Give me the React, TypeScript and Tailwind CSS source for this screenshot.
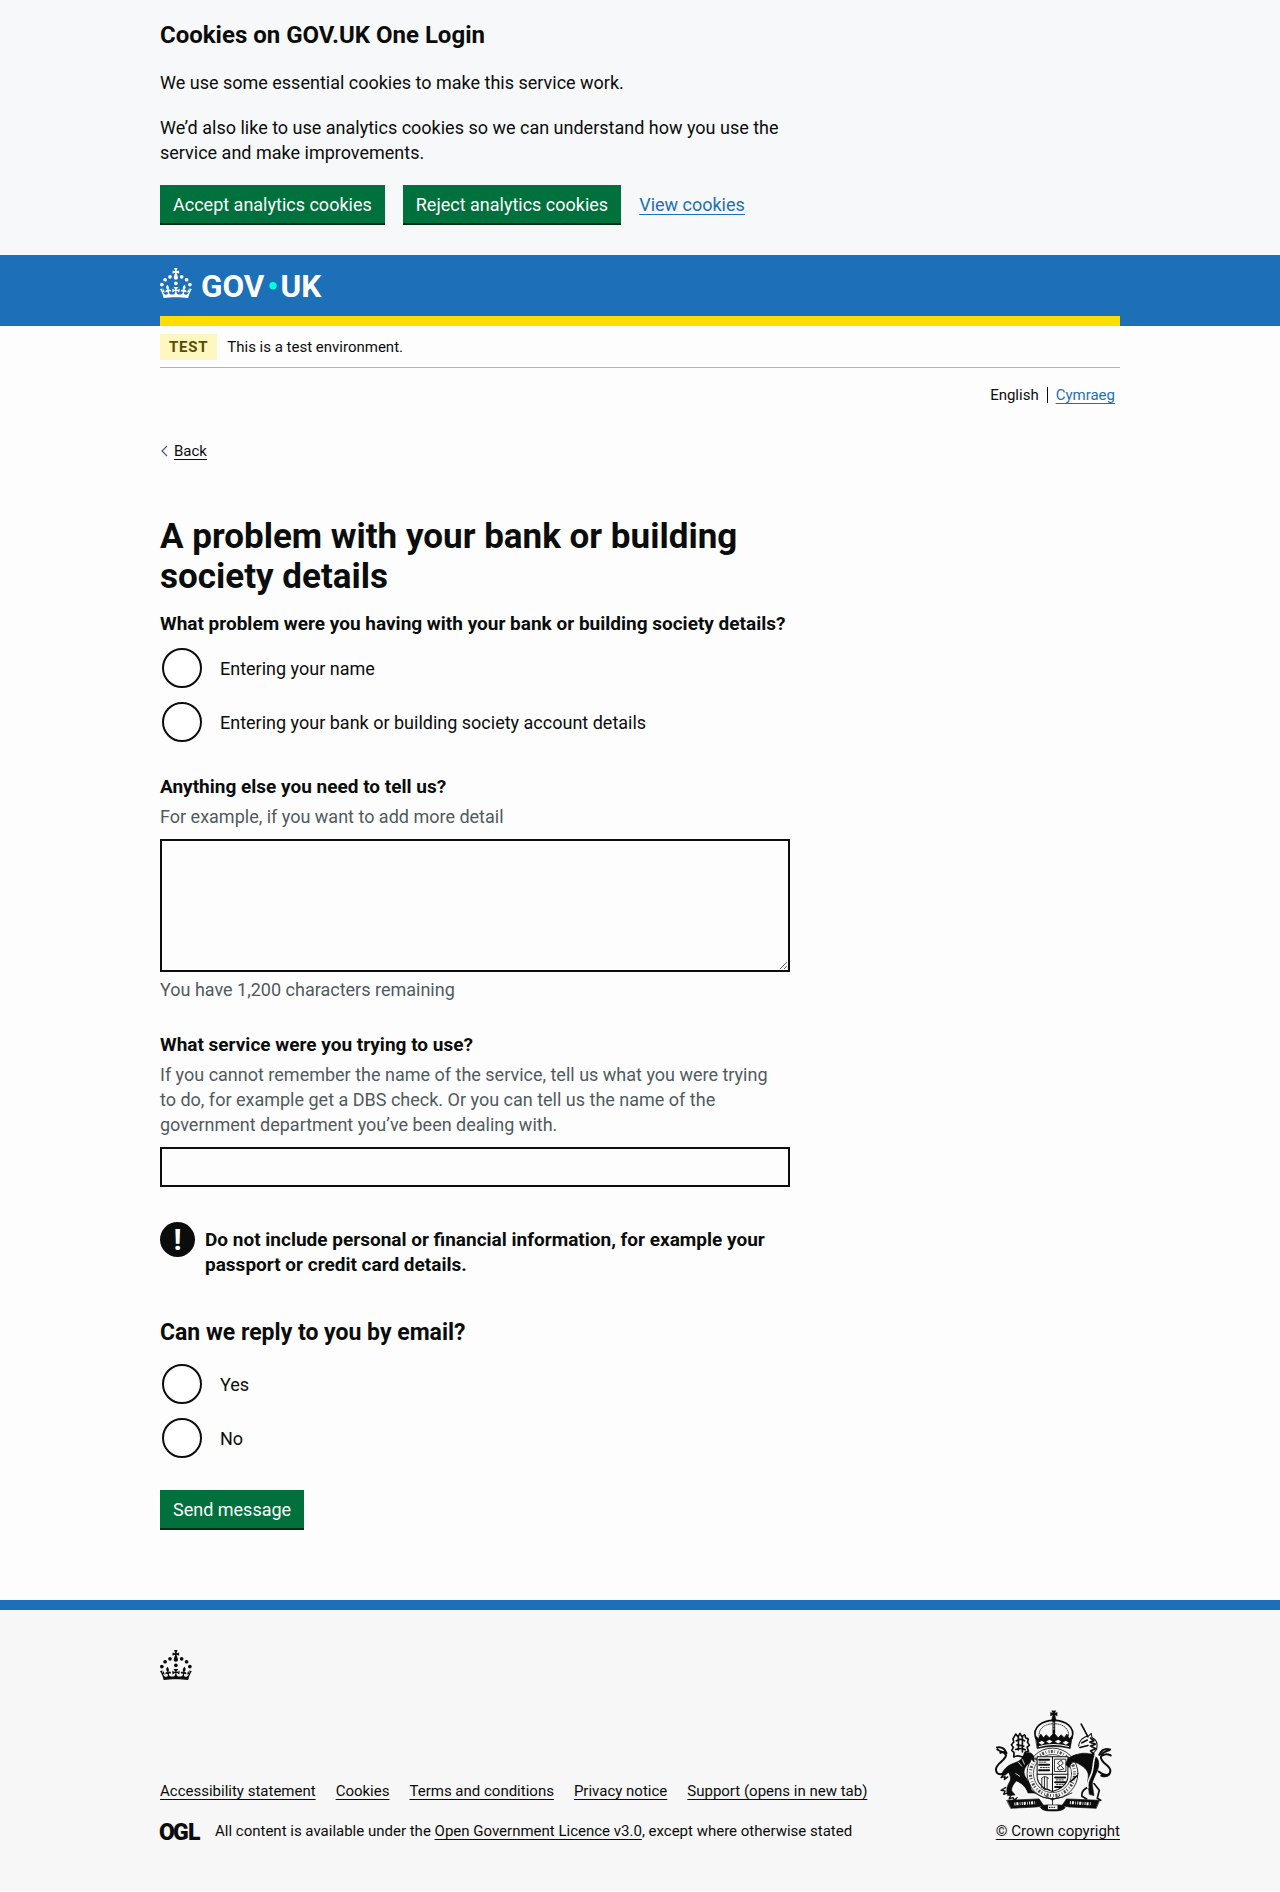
import { useState, type ReactNode } from 'react';

function CrownShape() {
  return (
    <>
      <circle cx="20" cy="17.6" r="3.7" />
      <circle cx="10.2" cy="23.5" r="3.7" />
      <circle cx="3.7" cy="33.2" r="3.7" />
      <circle cx="31.7" cy="30.6" r="3.7" />
      <circle cx="43.3" cy="17.6" r="3.7" />
      <circle cx="53.2" cy="23.5" r="3.7" />
      <circle cx="59.7" cy="33.2" r="3.7" />
      <path d="M33.1,9.8c.2-.1.3-.3.5-.5l4.6,2.4v-6.8l-4.6,1.5c-.1-.2-.3-.3-.5-.5l1.9-5.9h-6.7l1.9,5.9c-.2.1-.3.3-.5.5l-4.6-1.5v6.8l4.6-2.4c.1.2.3.3.5.5l-2.6,8c-.9,2.8,1.2,5.7,4.1,5.7h0c3,0,5.1-2.9,4.1-5.7l-2.6-8ZM37,37.9s-3.4,3.8-4.1,6.1c2.2,0,4.2-.5,6.4-2.8l-.7,8.5c-2-2.8-4.4-4.1-5.7-3.8.1,3.1.5,6.7,5.8,7.2,3.7.3,6.7-1.5,7-3.8.4-2.6-2-4.3-3.7-1.6-1.4-4.5,2.4-6.1,4.9-3.2-1.9-4.5-1.8-7.7,2.4-10.9,3,4,2.6,7.3-1.2,11.1,2.4-1.3,6.2,0,4,4.6-1.2-2.8-3.7-2.2-4.2.2-.3,1.7.7,3.7,3,4.2,1.9.3,4.7-.9,7-5.9-1.3,0-2.4.7-3.9,1.7l2.4-8c.6,2.3,1.4,3.7,2.2,4.5.6-1.6.5-2.8,0-5.3l5,1.8c-2.6,3.6-5.2,8.7-7.3,17.5-7.4-1.1-15.7-1.7-24.5-1.7h0c-8.8,0-17.1.6-24.5,1.7-2.1-8.9-4.7-13.9-7.3-17.5l5-1.8c-.5,2.5-.6,3.7,0,5.3.8-.8,1.6-2.3,2.2-4.5l2.4,8c-1.5-1-2.6-1.7-3.9-1.7,2.3,5,5.2,6.2,7,5.9,2.3-.4,3.3-2.4,3-4.2-.5-2.4-3-3.1-4.2-.2-2.2-4.6,1.6-6,4-4.6-3.7-3.7-4.2-7.1-1.2-11.1,4.2,3.2,4.3,6.4,2.4,10.9,2.5-2.8,6.3-1.3,4.9,3.2-1.8-2.7-4.1-1-3.7,1.6.3,2.3,3.3,4.1,7,3.8,5.4-.5,5.7-4.2,5.8-7.2-1.3-.2-3.7,1-5.7,3.8l-.7-8.5c2.2,2.3,4.2,2.7,6.4,2.8-.7-2.3-4.1-6.1-4.1-6.1h10.6,0Z" />
    </>
  );
}

function Crown() {
  return (
    <svg viewBox="0 0 64 60" className="h-[30px] w-8 shrink-0" fill="currentColor" aria-hidden="true">
      <CrownShape />
    </svg>
  );
}

function GovLogo() {
  return (
    <svg viewBox="0 0 324 60" className="h-[30px] w-[162px] overflow-visible" fill="currentColor" role="img" aria-label="GOV.UK">
      <CrownShape />
      <text x="82" y="57" fontFamily="Roboto, sans-serif" fontWeight="700" fontSize="63">
        GOV
      </text>
      <circle cx="226" cy="35.5" r="7.3" fill="#00ffe0" />
      <text x="241" y="57" fontFamily="Roboto, sans-serif" fontWeight="700" fontSize="63">
        UK
      </text>
    </svg>
  );
}

function OglLogo() {
  return (
    <svg viewBox="0 0 41 17" className="h-[17px] w-[41px] shrink-0 overflow-visible" fill="currentColor" role="img" aria-label="OGL">
      <g fontFamily="Roboto, sans-serif" fontWeight="900" fontSize="23">
        <text x="-1" y="16.5">O</text>
        <text x="13" y="16.5">G</text>
        <text x="28" y="16.5">L</text>
      </g>
    </svg>
  );
}

function RoyalArms() {
  return (
    <svg viewBox="0 0 350 305" className="h-[102px] w-[117px]" fill="none" stroke="#0b0c0c" strokeLinecap="round" strokeLinejoin="round" aria-hidden="true">
      {/* garter and shield */}
      <circle cx="172" cy="190" r="76" strokeWidth="2.5" />
      <circle cx="172" cy="190" r="66" strokeWidth="9" strokeLinecap="butt" strokeDasharray="3 4 6 5 2 7" opacity="0.75" />
      <circle cx="172" cy="190" r="57" strokeWidth="2" />
      <path d="M126 140h92v58c0 26-20 38-46 46-26-8-46-20-46-46Z" fill="#f7f7f7" strokeWidth="3" />
      <path d="M172 140v104M126 192h92" strokeWidth="3" />
      <path d="M132 149h34M132 164h34M132 180h34M180 202h32M180 216h32M180 230h20" strokeWidth="6" strokeDasharray="9 4 5 3" />
      <path d="M132 156h24M136 172h26M184 209h22M184 223h20" strokeWidth="2.5" strokeDasharray="4 4" />
      <path d="M179 147h33v37h-33ZM188 158l10-8 6 10-8 6 10 10-14 4-6-8 8-4ZM140 204v26M148 200v36M156 202v36M140 204q8-10 20 0M138 230q10 12 24 8" strokeWidth="2.5" />
      {/* crown */}
      <path d="M122 84c-12-32 20-53 54-53s66 21 54 53" strokeWidth="5" />
      <path d="M132 78c-2-24 18-37 44-37s46 13 44 37" strokeWidth="2.5" strokeDasharray="3 4" />
      <path d="M176 32v36" strokeWidth="8" />
      <path d="M176 38v24" stroke="#f7f7f7" strokeWidth="2" strokeDasharray="4 4" />
      <path d="M170 2h12l-3 8 7-3v11l-7-3 4 15h-14l4-15-7 3V7l7 3Z" fill="#0b0c0c" strokeWidth="1" />
      <path d="M121 78l9 7 7-13 8 11 8-9 10 9 13-15 13 15 9-9 9 9 8-11 7 13 9-7-6 37q-49-12-98 0Z" fill="#0b0c0c" strokeWidth="2" />
      <path d="M130 98l10-6 9 6-9 6ZM153 94l10-5 9 5-9 6ZM179 94l10-5 9 5-9 6ZM202 98l10-6 9 6-9 6Z" fill="#f7f7f7" stroke="none" />
      <path d="M132 109q43-11 88 0" stroke="#f7f7f7" strokeWidth="3" />
      {/* lion */}
      <path d="M62 72l7 8 6-10 5 9 9-5 3 10 8 2-3 10 6 9-7 6 4 12-10 3 4 12-12 2-14-3-12 3 1-13-7-6 5-9-6-8 7-8-2-10Z" strokeWidth="5" strokeDasharray="6 3" />
      <path d="M64 92q12-8 24 0M66 104l20 4M62 118q16-6 30 2M70 82v40M82 80v46" strokeWidth="5" strokeDasharray="5 3" />
      <path d="M94 128c18-4 26 12 22 26l-8-8-4 12c-14 10-22 24-14 40 8 14 18 26 18 40l12 10-22 0c-6-18-18-30-34-36-8 8-16 20-14 30l10 12-22 2c-4-12-4-24 4-38 8-12 4-22-2-32-6 8-14 12-20 8 4-16 18-28 34-34 16-6 28-10 34-32Z" fill="#0b0c0c" strokeWidth="2" />
      <path d="M70 156l10 12M82 148l6 14M62 190l12 8M88 232l8 14" stroke="#f7f7f7" strokeWidth="2.5" />
      <path d="M26 192l-8 10 12-3-2 9 10-8M32 232l-14 8 12 2-4 10 14-5M48 254l-6 12 12-4 4 8 8-8" strokeWidth="4" />
      <path d="M44 178c-20 18-42 20-41-2 1-16 26-24 30-40-4-12-12-8-26-18M6 112q20-4 28 16M16 128q12-6 18 2" strokeWidth="6" />
      {/* unicorn */}
      <path d="M258 42l20 38" strokeWidth="5" strokeDasharray="5 2" />
      <path d="M250 108c2-16 14-28 32-32l6-6 2 12c14 6 18 20 14 36l-16 18" strokeWidth="3" />
      <path d="M260 98l16-8M254 112l24-6M286 84l10 8-12 4 16 6-14 6 16 8-16 6 10 10-16 2" strokeWidth="5" />
      <path d="M242 134c20-8 44-6 60 6 14 14 8 34 0 50-6 16-14 26-10 40l4 26-14-4c0-16-8-28-4-44 4-18-2-28-14-38-12-8-22-16-34-14l-8 16-10-8c2-16 12-26 30-30Z" fill="#0b0c0c" strokeWidth="2" />
      <path d="M246 196l-20 18M282 230c-18 6-24 16-22 28l14 8M296 220l16 20-6 24 10 6" strokeWidth="5" />
      <path d="M302 132c-10 20-6 40-14 60s-12 24-10 40" stroke="#f7f7f7" strokeWidth="5" strokeDasharray="6 3" />
      <path d="M310 184c20 16 36 12 35-4-2-16-30-22-28-40 2-12 8-14 26-20M344 118q-22-6-32 16M346 136q-14-8-24 0M318 196q14 6 24-4" strokeWidth="6" />
      {/* motto ribbon */}
      <path d="M36 270l96-4 14 20-22 4-76 4Z" fill="#0b0c0c" strokeWidth="2" />
      <path d="M312 270l-98-4-14 20 22 4 80 4Z" fill="#0b0c0c" strokeWidth="2" />
      <path d="M58 281l66-4M224 277l66 4" stroke="#f7f7f7" strokeWidth="9" strokeLinecap="butt" strokeDasharray="3 3 6 4 2 4" />
      <path d="M118 248q52 36 112 0M150 256l22 14 22-14M172 262v26" strokeWidth="2.5" />
      <path d="M136 292c8-12 26-8 36-4 12-4 32-8 38 4-8 10-24 10-38 10s-28 0-36-10Z" fill="#0b0c0c" strokeWidth="2" />
      <path d="M158 284h30v14h-30Z" fill="#f7f7f7" strokeWidth="2" />
      <path d="M163 291h20" strokeWidth="4" strokeDasharray="1 6" />
    </svg>
  );
}

function Container({ children }: { children: ReactNode }) {
  return <div className="mx-auto w-full max-w-[990px] px-[15px]">{children}</div>;
}

function GreenButton({ children }: { children: ReactNode }) {
  return (
    <button type="button" className="h-[38px] bg-[#00703c] px-[13px] pt-0.5 text-lg leading-5 text-white shadow-[0_2px_0_#002d18]">
      {children}
    </button>
  );
}

function RadioGroup({ name, options }: { name: string; options: string[] }) {
  return (
    <div className="flex flex-col gap-[14px] pl-0.5">
      {options.map((label, i) => (
        <div key={label} className="flex items-center gap-[18px]">
          <input
            type="radio"
            id={`${name}-${i}`}
            name={name}
            className="size-10 shrink-0 appearance-none rounded-full border-2 border-[#0b0c0c] bg-white checked:shadow-[inset_0_0_0_8px_white] checked:bg-[#0b0c0c]"
          />
          <label htmlFor={`${name}-${i}`} className="leading-[25px]">
            {label}
          </label>
        </div>
      ))}
    </div>
  );
}

const footerLinks = ['Accessibility statement', 'Cookies', 'Terms and conditions', 'Privacy notice', 'Support (opens in new tab)'];

const MAX_CHARS = 1200;

export default function App() {
  const [details, setDetails] = useState('');
  return (
    <div className="bg-[#fdfdfd] font-[Roboto,sans-serif] text-lg leading-[25px] text-[#0b0c0c]">
      <section aria-label="Cookies on GOV.UK One Login" className="bg-[#f6f8f9] pt-5 pb-8">
        <Container>
          <div className="max-w-[630px]">
            <h2 className="text-2xl leading-[30px] font-bold">Cookies on GOV.UK One Login</h2>
            <p className="mt-5">We use some essential cookies to make this service work.</p>
            <p className="mt-5">We’d also like to use analytics cookies so we can understand how you use the service and make improvements.</p>
            <div className="mt-5 flex flex-wrap items-center gap-[18px]">
              <GreenButton>Accept analytics cookies</GreenButton>
              <GreenButton>Reject analytics cookies</GreenButton>
              <a href="#cookies" className="text-[#1d70b8] underline underline-offset-3">View cookies</a>
            </div>
          </div>
        </Container>
      </section>

      <header className="bg-[#1d70b8] pt-[13px]">
        <Container>
          <div className="border-b-10 border-[#ffdd00] pb-[18px]">
            <a href="#home" className="block w-fit text-white">
              <GovLogo />
            </a>
          </div>
        </Container>
      </header>

      <Container>
        <div className="flex items-center gap-2.5 border-b border-[#b1b4b6] pt-2 pb-[7px] text-[15px]">
          <strong className="bg-[#fff7bf] px-[9px] leading-[26px] font-bold tracking-wider text-[#594d00]">TEST</strong>
          <span className="leading-5">This is a test environment.</span>
        </div>

        <nav aria-label="Language" className="mt-[17px] pr-[5px]">
          <ul className="flex items-center justify-end text-[15px] leading-5">
            <li className="border-r border-[#0b0c0c] pr-2 leading-4">English</li>
            <li className="pl-2">
              <a href="#cy" className="text-[#1d70b8] underline underline-offset-3">Cymraeg</a>
            </li>
          </ul>
        </nav>

        <div className="mt-9 flex items-center gap-1.5 text-[15px] leading-5">
          <svg viewBox="0 0 8 12" className="h-3 w-2" fill="none" stroke="#505a5f" strokeWidth="1.2" aria-hidden="true">
            <path d="M7 1 2 6l5 5" />
          </svg>
          <a href="#back" className="underline underline-offset-3">Back</a>
        </div>

        <main className="mt-14 max-w-[630px]">
          <h1 className="text-[35px] leading-10 font-bold">A problem with your bank or building society details</h1>

          <fieldset className="mt-[14px]">
            <legend className="mb-3 text-[19px] leading-[25px] font-bold">What problem were you having with your bank or building society details?</legend>
            <RadioGroup name="problem" options={['Entering your name', 'Entering your bank or building society account details']} />
          </fieldset>

          <div className="mt-8">
            <label htmlFor="more" className="block text-[19px] font-bold">Anything else you need to tell us?</label>
            <p className="mt-[5px] text-[#505a5f]">For example, if you want to add more detail</p>
            <textarea
              id="more"
              maxLength={MAX_CHARS}
              value={details}
              onChange={(e) => setDetails(e.target.value)}
              className="mt-2.5 block h-[133px] w-full resize-y border-2 border-[#0b0c0c] p-[5px]"
            />
            <p className="mt-[5px] text-[#505a5f]">You have {(MAX_CHARS - details.length).toLocaleString('en-GB')} characters remaining</p>
          </div>

          <div className="mt-[30px]">
            <label htmlFor="service" className="block text-[19px] font-bold">What service were you trying to use?</label>
            <p className="mt-[5px] pr-4 text-[#505a5f]">
              If you cannot remember the name of the service, tell us what you were trying to do, for example get a DBS check. Or you can tell us the name of the government department you’ve been dealing with.
            </p>
            <input id="service" type="text" className="mt-2.5 block h-10 w-full border-2 border-[#0b0c0c] px-[5px]" />
          </div>

          <div className="mt-[35px] flex items-start gap-2.5">
            <span aria-hidden="true" className="flex size-[35px] shrink-0 items-center justify-center rounded-full bg-[#0b0c0c] text-3xl leading-none font-bold text-white">!</span>
            <strong className="pt-[5px] text-[19px] font-bold">Do not include personal or financial information, for example your passport or credit card details.</strong>
          </div>

          <fieldset className="mt-[41px]">
            <legend className="mb-4 text-[23px] leading-[30px] font-bold">Can we reply to you by email?</legend>
            <RadioGroup name="reply" options={['Yes', 'No']} />
          </fieldset>

          <div className="mt-8">
            <GreenButton>Send message</GreenButton>
          </div>
        </main>
      </Container>

      <footer className="mt-[72px] border-t-10 border-[#1d70b8] bg-[#f7f7f7] pt-10 pb-[50px] text-[15px] leading-5">
        <Container>
          <Crown />
          <div className="mt-[30px] flex items-end justify-between gap-8">
            <div>
              <ul className="flex flex-wrap gap-x-5 gap-y-2">
                {footerLinks.map((text) => (
                  <li key={text}>
                    <a href="#footer" className="underline underline-offset-3">{text}</a>
                  </li>
                ))}
              </ul>
              <div className="mt-5 flex items-center gap-3.5">
                <OglLogo />
                <span>
                  All content is available under the <a href="#ogl" className="underline underline-offset-3">Open Government Licence v3.0</a>, except where otherwise stated
                </span>
              </div>
            </div>
            <a href="#copyright" className="flex flex-col items-end gap-[9px] underline underline-offset-3">
              <span className="pr-2">
                <RoyalArms />
              </span>
              <span>© Crown copyright</span>
            </a>
          </div>
        </Container>
      </footer>
    </div>
  );
}
